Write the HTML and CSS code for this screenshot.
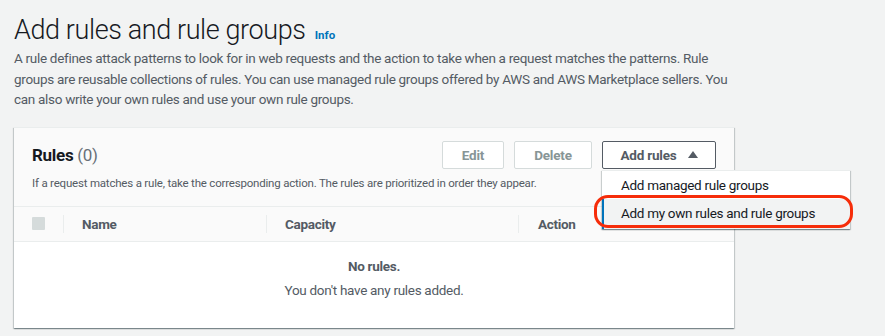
FILE: index.html
```html
<!DOCTYPE html>
<html>
<head>
<meta charset="utf-8">
<link rel="stylesheet" href="styles.css">
</head>
<body>
<div class="page">
  <h1 class="title">Add rules and rule groups <a class="info" href="#">Info</a></h1>
  <p class="desc">A rule defines attack patterns to look for in web requests and the action to take when a request matches the patterns. Rule groups are reusable collections of rules. You can use managed rule groups offered by AWS and AWS Marketplace sellers. You can also write your own rules and use your own rule groups.</p>
  <div class="card">
    <div class="card-header">
      <div class="hdr-row">
        <h2 class="card-title">Rules <span class="count">(0)</span></h2>
        <div class="actions">
          <button class="btn disabled btn-edit">Edit</button>
          <button class="btn disabled btn-delete">Delete</button>
          <div class="dd-wrap">
            <button class="btn primary-outline">Add rules <span class="caret"></span></button>
            <ul class="menu">
              <li class="item">Add managed rule groups</li>
              <li class="item hover">Add my own rules and rule groups</li>
            </ul>
            <div class="highlight"></div>
          </div>
        </div>
      </div>
      <p class="card-desc">If a request matches a rule, take the corresponding action. The rules are prioritized in order they appear.</p>
    </div>
    <div class="thead">
      <div class="th th-check"><span class="checkbox"></span></div>
      <div class="th th-name">Name</div>
      <div class="th th-cap">Capacity</div>
      <div class="th th-action">Action</div>
    </div>
    <div class="empty">
      <div class="empty-title">No rules.</div>
      <div class="empty-text">You don't have any rules added.</div>
    </div>
  </div>
</div>
</body>
</html>
```
FILE: styles.css
```css
* { box-sizing: border-box; }
html, body { margin: 0; padding: 0; }
body {
  background: #f2f3f3;
  font-family: Roboto, "Noto Sans", sans-serif;
  color: #16191f;
  width: 885px;
  height: 336px;
  overflow: hidden;
  letter-spacing: -0.3px;
}
.page { padding: 15px 14px 0 14px; }
.title {
  margin: 0;
  font-size: 27px;
  font-weight: 300;
  line-height: 30px;
  color: #16191f;
  letter-spacing: -0.4px;
}
.info {
  font-size: 11.5px;
  font-weight: 700;
  color: #0073bb;
  text-decoration: none;
  letter-spacing: 0;
  margin-left: 3px;
}
.desc {
  margin: -2px 0 0 0;
  font-size: 13.5px;
  line-height: 20.5px;
  color: #545b64;
  max-width: 720px;
}
.card {
  margin-top: 17px;
  width: 720px;
  background: #fff;
  box-shadow: 0 1px 1px 0 rgba(0,28,36,0.3), 1px 1px 1px 0 rgba(0,28,36,0.15), -1px 1px 1px 0 rgba(0,28,36,0.15);
  border-top: 1px solid #eaeded;
}
.card-header {
  background: #fafafa;
  padding: 13px 18px 16px 18px;
  border-bottom: 1px solid #eaeded;
}
.hdr-row {
  display: flex;
  align-items: center;
  justify-content: space-between;
}
.card-title {
  margin: 0;
  font-size: 17px;
  font-weight: 700;
  line-height: 28px;
  color: #16191f;
  letter-spacing: -0.3px;
}
.count { font-weight: 400; color: #687078; }
.actions { display: flex; gap: 10px; align-items: center; }
.btn {
  height: 28px;
  font-family: inherit;
  font-size: 13.5px;
  font-weight: 700;
  letter-spacing: -0.2px;
  background: #fff;
  border: 1px solid #d5dbdb;
  border-radius: 2px;
  padding: 0;
  color: #879596;
  white-space: nowrap;
}
.btn-edit { width: 62px; }
.btn-delete { width: 78px; }
.btn.primary-outline {
  border-color: #545b64;
  color: #545b64;
  display: flex;
  align-items: center;
  justify-content: center;
  gap: 11px;
  width: 114px;
}
.caret {
  display: inline-block;
  width: 0; height: 0;
  border-left: 5px solid transparent;
  border-right: 5px solid transparent;
  border-bottom: 7px solid #545b64;
  margin-top: -1px;
}
.dd-wrap { position: relative; }
.menu {
  position: absolute;
  left: 0;
  top: 29px;
  width: 248px;
  margin: 0;
  padding: 0;
  list-style: none;
  background: #fff;
  box-shadow: 0 1px 1px 0 rgba(0,28,36,0.3), 1px 1px 1px 0 rgba(0,28,36,0.15), -1px 1px 1px 0 rgba(0,28,36,0.15);
  border-top: 1px solid #eaeded;
  z-index: 2;
}
.item {
  font-size: 13.5px;
  line-height: 20px;
  padding: 4px 18px 4px 18px;
  color: #16191f;
  white-space: nowrap;
  border-left: 1px solid transparent;
}
.item.hover {
  background: #f2f3f3;
  border-left: 2px solid #0073bb;
  padding-left: 17px;
  padding-top: 4px;
  padding-bottom: 6px;
}
.highlight {
  position: absolute;
  left: -8px;
  top: 54px;
  width: 259px;
  height: 33px;
  border: 3px solid #f62d0a;
  border-radius: 14px;
  z-index: 3;
}
.card-desc {
  margin: 7px 0 0 0;
  font-size: 11.5px;
  line-height: 14px;
  color: #545b64;
  letter-spacing: -0.2px;
}
.thead {
  display: flex;
  height: 35px;
  background: #fafafa;
  align-items: center;
  border-bottom: 1px solid #eaeded;
}
.th {
  font-size: 13.5px;
  font-weight: 700;
  color: #545b64;
  display: flex;
  align-items: center;
}
.th-check { width: 49px; padding-left: 18px; }
.checkbox { width: 13px; height: 13px; background: #d5dbdb; display: block; border-radius: 1px; }
.th-name { width: 203px; padding-left: 18px; border-left: 1px solid #eaeded; height: 18px; }
.th-cap { width: 252px; padding-left: 18px; border-left: 1px solid #eaeded; height: 18px; }
.th-action { padding-left: 19px; border-left: 1px solid #eaeded; height: 18px; }
.empty {
  height: 86px;
  text-align: center;
  padding-top: 14px;
}
.empty-title {
  font-size: 13.5px;
  font-weight: 700;
  color: #545b64;
  line-height: 20px;
}
.empty-text {
  font-size: 13.5px;
  color: #545b64;
  line-height: 20px;
  margin-top: 4px;
}
```
